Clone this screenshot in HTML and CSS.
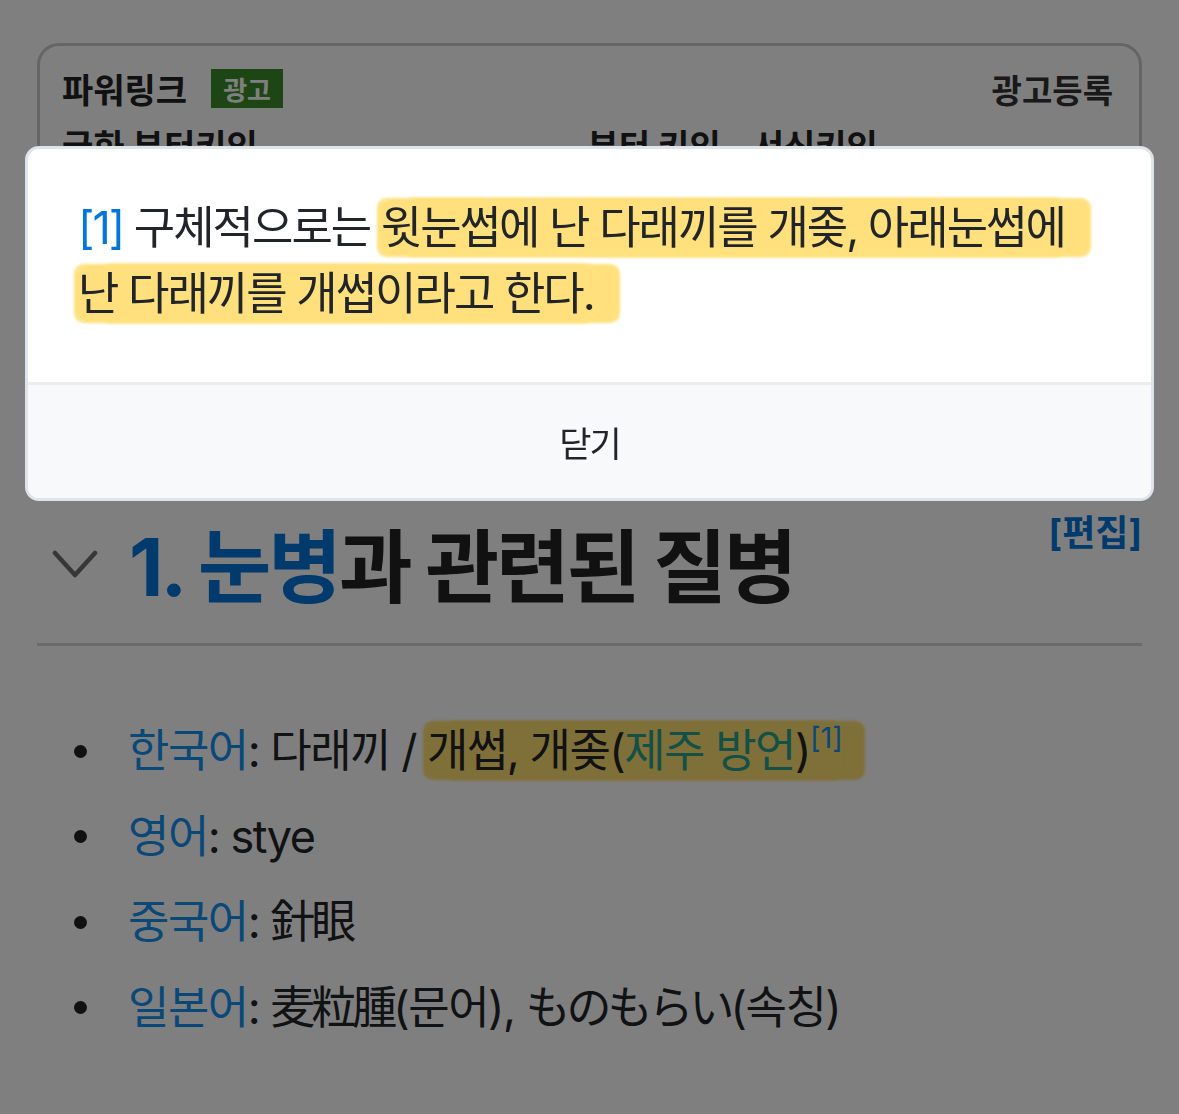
FILE: index.html
```html
<!DOCTYPE html>
<html lang="ko">
<head>
    <meta charset="UTF-8">
    <title>다래끼</title>
    <link rel="stylesheet" href="styles.css">
</head>
<body>

<div class="page">
    <div class="ad">
        <div class="ad-head">
            <span class="ad-title">파워링크</span>
            <span class="ad-badge">광고</span>
            <span class="ad-reg">광고등록</span>
        </div>
        <div class="ad-row">
            <span>국화 부터키인</span>
            <span>부터 키인 - 서신키인</span>
        </div>
    </div>

    <h2 class="section">
        <svg class="fold" width="46" height="30" viewBox="0 0 46 30">
            <path d="M3 4 L23 26 L43 4" fill="none" stroke="#6e6e6e" stroke-width="4.5" stroke-linecap="round" stroke-linejoin="round"/>
        </svg>
        <span class="section-title"><span class="num">1.</span> <a class="blue">눈병</a>과 관련된 질병</span>
        <a class="edit">[편집]</a>
    </h2>

    <ul class="langs">
        <li><span><a class="link">한국어</a>: 다래끼 / <mark class="hl">개썹, 개좆(<a class="ext">제주 방언</a>)<sup>[1]</sup></mark></span></li>
        <li><span><a class="link">영어</a>: stye</span></li>
        <li><span><a class="link">중국어</a>: <span class="han">針眼</span></span></li>
        <li><span><a class="link">일본어</a>: <span class="han">麦粒腫</span>(문어), <span class="han">ものもらい</span>(속칭)</span></li>
    </ul>
</div>

<div class="dim"></div>

<div class="modal">
    <div class="modal-body">
        <a class="ref">[1]</a> 구체적으로는 <mark class="hl">윗눈썹에 난 다래끼를 개좆, 아래눈썹에 난 다래끼를 개썹이라고 한다.</mark>
    </div>
    <div class="modal-foot">
        <button class="close">닫기</button>
    </div>
</div>

</body>
</html>
```

FILE: styles.css
```css
body {
    margin: 0;
    background-color: #fff;
    color: #212529;
    font-family: Inter, "Noto Sans CJK KR", sans-serif;
    word-break: keep-all;
}
.page {
    padding: 43px 37px 0;
}
.ad {
    height: 440px;
    box-sizing: border-box;
    border: 3px solid #cacaca;
    border-radius: 22px;
    padding: 23px 26px 0 22px;
}
.ad-head {
    display: flex;
    align-items: center;
    height: 39px;
}
.ad-title {
    font-size: 34px;
    font-weight: 700;
    color: #222;
}
.ad-badge {
    display: flex;
    align-items: center;
    justify-content: center;
    width: 72px;
    height: 39px;
    margin-left: 24px;
    background-color: #3c8c28;
    color: #fff;
    font-size: 26px;
    font-weight: 700;
}
.ad-reg {
    margin-left: auto;
    font-size: 33px;
    font-weight: 700;
    color: #333;
}
.ad-row {
    display: grid;
    grid-template-columns: 1fr 1fr;
    margin-top: 14px;
    font-size: 34px;
    line-height: 50px;
    font-weight: 700;
    color: #222;
}
.section {
    display: flex;
    align-items: center;
    margin: 39px 0 0;
    padding: 0 0 32px 15px;
    border-bottom: 3px solid #d6d6d6;
    font-size: 80px;
    line-height: 89px;
    letter-spacing: -3px;
    font-weight: 700;
    color: #222;
}
.fold {
    margin-right: 31px;
    margin-bottom: 6px;
    flex-shrink: 0;
}
.num, .blue {
    color: #0275d8;
}
.edit {
    align-self: flex-start;
    margin: -10px 0 0 auto;
    font-size: 36px;
    line-height: 43px;
    letter-spacing: 0;
    color: #0275d8;
}
.langs {
    list-style: none;
    margin: 74px 0 0;
    padding: 0;
    font-size: 45px;
    line-height: 62px;
    letter-spacing: -1.5px;
}
.langs li {
    display: flex;
    margin-bottom: 23.5px;
    white-space: nowrap;
}
.langs li::before {
    content: "";
    flex-shrink: 0;
    width: 13px;
    height: 13px;
    margin: 24.5px 41px 0 37px;
    border-radius: 50%;
    background-color: #222;
}
.han {
    letter-spacing: -4px;
}
.link {
    color: #1490f0;
}
.ext {
    color: #28a08c;
}
sup {
    font-size: 29px;
    line-height: 0;
    vertical-align: 19px;
    letter-spacing: 0;
    color: #1490f0;
}
.hl {
    color: inherit;
    background-color: #ffdf70;
    border-radius: 8px;
    -webkit-box-decoration-break: clone;
    box-decoration-break: clone;
    box-shadow: -2px 0 3px 2px #ffdf70, 20px 0 3px 2px #ffdf70;
}
.dim {
    position: fixed;
    inset: 0;
    background-color: rgba(0, 0, 0, 0.5);
}
.modal {
    position: fixed;
    left: 25px;
    top: 146px;
    width: 1129px;
    box-sizing: border-box;
    border: 3px solid #dfe4ea;
    border-radius: 14px;
    overflow: hidden;
    background-color: #fff;
}
.modal-body {
    padding: 46px 48px 55px 50px;
    font-size: 45px;
    line-height: 66px;
    letter-spacing: -2px;
    color: #212529;
}
.ref {
    color: #0275d8;
}
.modal .hl {
    background-color: #ffe07c;
    box-shadow: -2px 0 3px 2px #ffe07c, 24px 0 3px 2px #ffe07c;
}
.modal-foot {
    display: flex;
    align-items: center;
    justify-content: center;
    height: 113px;
    border-top: 3px solid #ebedef;
    background-color: #f8f9fa;
}
.close {
    border: none;
    background: none;
    padding: 0;
    font-family: inherit;
    font-size: 35px;
    letter-spacing: -2px;
    color: #212529;
}
```
